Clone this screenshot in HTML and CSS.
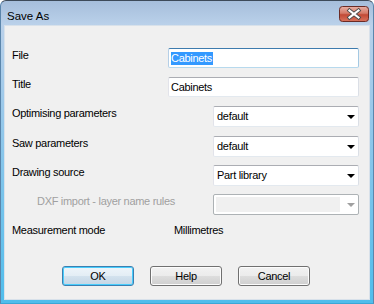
FILE: index.html
```html
<!DOCTYPE html>
<html lang="en">
<head>
  <meta charset="UTF-8">
  <title>Save As</title>
  <link rel="stylesheet" href="styles.css">
</head>
<body>
  <div class="window">
    <div class="titlebar">
      <span class="caption">Save As</span>
      <span class="close-btn">
        <svg width="30" height="16" viewBox="0 0 30 16">
          <defs>
            <linearGradient id="closeGrad" x1="0" y1="0" x2="0" y2="1">
              <stop offset="0" stop-color="#e9b1a6"/>
              <stop offset="0.45" stop-color="#d47a68"/>
              <stop offset="0.55" stop-color="#c24a36"/>
              <stop offset="1" stop-color="#d9735d"/>
            </linearGradient>
          </defs>
          <rect x="0.5" y="0.5" width="29" height="15" rx="3" fill="url(#closeGrad)" stroke="#6b2b25"/>
          <path d="M10.5 4.5 L19.5 11.5 M19.5 4.5 L10.5 11.5" stroke="#4a4a4a" stroke-width="4" stroke-linecap="square"/>
          <path d="M10.5 4.5 L19.5 11.5 M19.5 4.5 L10.5 11.5" stroke="#ffffff" stroke-width="2.2" stroke-linecap="square"/>
        </svg>
      </span>
    </div>

    <div class="client">
      <div class="form">
        <div class="lbl">File</div>
        <div class="textbox focused"><span class="selected">Cabinets</span></div>

        <div class="lbl">Title</div>
        <div class="textbox">Cabinets</div>

        <div class="lbl">Optimising parameters</div>
        <div class="combo"><span class="combo-text">default</span><span class="arrow"></span></div>

        <div class="lbl">Saw parameters</div>
        <div class="combo"><span class="combo-text">default</span><span class="arrow"></span></div>

        <div class="lbl">Drawing source</div>
        <div class="combo"><span class="combo-text">Part library</span><span class="arrow"></span></div>

        <div class="lbl indent disabled">DXF import - layer name rules</div>
        <div class="combo disabled"><span class="combo-fill"></span><span class="arrow"></span></div>

        <div class="lbl">Measurement mode</div>
        <div class="value">Millimetres</div>
      </div>

      <div class="buttons">
        <div class="btn default">OK</div>
        <div class="btn">Help</div>
        <div class="btn">Cancel</div>
      </div>
    </div>
  </div>
</body>
</html>
```

FILE: styles.css
```css
body {
  margin: 0;
  background-color: #ffffff;
  font-family: "Liberation Sans", Arial, sans-serif;
  font-size: 11px;
  letter-spacing: -0.3px;
  color: #000000;
}

.window {
  width: 374px;
  height: 304px;
  box-sizing: border-box;
  border: 1px solid #4c5a6a;
  border-top-color: #3d4a59;
  border-bottom-color: #3aa7d6;
  border-left-color: #5b86ac;
  border-right-color: #5b86ac;
  border-radius: 6px 6px 0 0;
  background: linear-gradient(to bottom, #a6bedb 0, #bad1ea 24px, #9dc9ea 100px, #4fbdec 100%);
  padding: 0 3px 3px 3px;
  display: flex;
  flex-direction: column;
}

.titlebar {
  height: 24px;
  display: flex;
  align-items: center;
  justify-content: space-between;
}

.caption {
  font-size: 11.5px;
  letter-spacing: 0;
  padding-left: 3px;
  padding-top: 5px;
  color: #000000;
}

.close-btn {
  display: flex;
  margin-right: 1px;
  margin-top: 1px;
}

.client {
  flex: 1;
  background-color: #f0f0f0;
  box-shadow: inset 0 0 0 1px #d8e1ea;
}

.form {
  display: grid;
  grid-template-columns: 156px 191px;
  grid-template-rows: repeat(2, 29px) 30px repeat(4, 29px);
  padding: 23px 11px 0 8px;
}

.lbl {
  line-height: 13px;
  padding-top: 1px;
  white-space: nowrap;
}

.lbl.indent {
  padding-left: 25px;
}

.lbl.disabled {
  color: #a0a0a0;
}

.textbox {
  width: 191px;
  height: 20px;
  box-sizing: border-box;
  background-color: #ffffff;
  border: 1px solid;
  border-color: #abadb3 #dbdfe6 #e3e9ef #e2e3ea;
  border-radius: 2px;
  padding: 0 2px;
  line-height: 18px;
  white-space: nowrap;
}

.textbox.focused {
  border-color: #3d7bad #a4c9e3 #b7d9ed #b5cfe7;
}

.selected {
  display: inline-block;
  background-color: #3399ff;
  color: #ffffff;
  line-height: 13px;
  padding: 0 1px 0 0;
}

.combo {
  justify-self: end;
  width: 146px;
  height: 21px;
  box-sizing: border-box;
  background-color: #ffffff;
  border: 1px solid;
  border-color: #abadb3 #dbdfe6 #e3e9ef #e2e3ea;
  border-radius: 2px;
  display: flex;
  align-items: center;
  padding: 0 3px 0 3px;
}

.combo-text {
  flex: 1;
  line-height: 13px;
}

.arrow {
  width: 0;
  height: 0;
  border-left: 4px solid transparent;
  border-right: 4px solid transparent;
  border-top: 4px solid #000000;
  margin-right: 0;
}

.combo.disabled {
  border-color: #adb2b5;
  padding: 0 3px 0 2px;
}

.combo-fill {
  width: 124px;
  height: 15px;
  background-color: #f0f0f0;
  margin-right: auto;
}

.combo.disabled .arrow {
  border-top-color: #a0a0a0;
}

.value {
  padding-left: 6px;
  padding-top: 1px;
  line-height: 13px;
}

.buttons {
  display: flex;
  gap: 16px;
  margin-top: 14px;
  padding-left: 58px;
}

.btn {
  width: 72px;
  height: 20px;
  box-sizing: border-box;
  border: 1px solid #707070;
  border-radius: 3px;
  background: linear-gradient(to bottom, #f2f2f2 0, #ebebeb 50%, #dddddd 50%, #cfcfcf 100%);
  box-shadow: inset 0 0 0 1px #fcfcfc;
  text-align: center;
  line-height: 18px;
}

.btn.default {
  border-color: #3c7fb1;
  box-shadow: inset 0 0 0 1px #48cdfc;
  background: linear-gradient(to bottom, #eef5fa 0, #e3edf5 50%, #d3e2ee 50%, #c4d6e5 100%);
}
```
